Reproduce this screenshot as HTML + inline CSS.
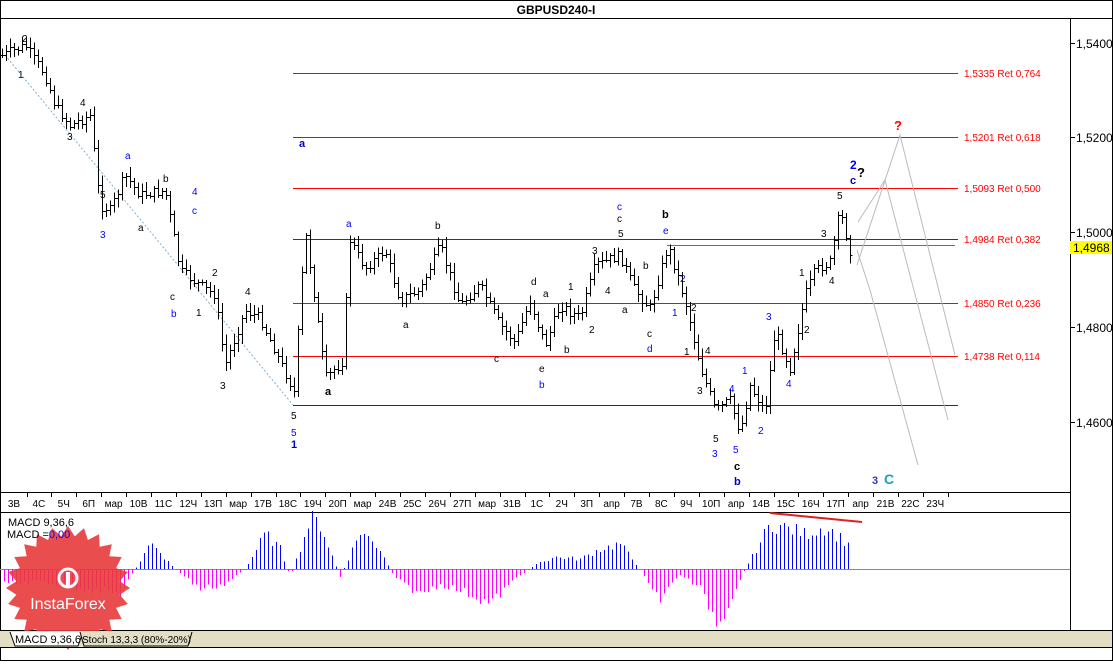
<!DOCTYPE html>
<html><head><meta charset="utf-8">
<style>
html,body{margin:0;padding:0;background:#fff;}
body{width:1113px;height:661px;overflow:hidden;font-family:"Liberation Sans",sans-serif;}
svg text{font-family:"Liberation Sans","DejaVu Sans",sans-serif;}
</style></head><body>
<svg id="s" width="1113" height="661" xmlns="http://www.w3.org/2000/svg" shape-rendering="crispEdges">
<rect width="1113" height="661" fill="#fff"/>
<!-- frame -->
<rect x="0.5" y="0.5" width="1112" height="660" fill="none" stroke="#000"/>
<line x1="0" y1="18.5" x2="1113" y2="18.5" stroke="#000"/>
<text x="556" y="14" font-size="12" font-weight="bold" text-anchor="middle">GBPUSD240-I</text>
<line x1="1070.5" y1="18" x2="1070.5" y2="630" stroke="#000"/>
<line x1="0" y1="492.5" x2="1070" y2="492.5" stroke="#000"/>
<line x1="0" y1="512.5" x2="1070" y2="512.5" stroke="#000"/>
<line x1="0" y1="630.5" x2="1113" y2="630.5" stroke="#000"/>
<!-- price axis -->
<g font-size="12" fill="#000">
<line x1="1070" y1="43.5" x2="1075" y2="43.5" stroke="#000"/><text x="1076" y="48">1,5400</text>
<line x1="1070" y1="137.5" x2="1075" y2="137.5" stroke="#000"/><text x="1076" y="142">1,5200</text>
<line x1="1070" y1="232.5" x2="1075" y2="232.5" stroke="#000"/><text x="1076" y="237">1,5000</text>
<line x1="1070" y1="327.5" x2="1075" y2="327.5" stroke="#000"/><text x="1076" y="332">1,4800</text>
<line x1="1070" y1="422.5" x2="1075" y2="422.5" stroke="#000"/><text x="1076" y="427">1,4600</text>
<rect x="1070" y="241" width="42" height="13" fill="#ffff00"/><text x="1073" y="252">1,4968</text>
</g>
<!-- fib lines -->
<g stroke="#ff0000">
<line x1="293" y1="73.5" x2="958" y2="73.5"/>
<line x1="293" y1="137.5" x2="958" y2="137.5"/>
<line x1="293" y1="188.5" x2="958" y2="188.5"/>
<line x1="293" y1="239.5" x2="958" y2="239.5" stroke="#c00000"/>
<line x1="293" y1="303.5" x2="958" y2="303.5"/>
<line x1="293" y1="356.5" x2="958" y2="356.5"/>
<line x1="293" y1="405.5" x2="958" y2="405.5" stroke="#a00000"/>
</g>
<line x1="667" y1="245.5" x2="955" y2="245.5" stroke="#e020e0"/>
<g font-size="10" fill="#ff0000">
<text x="964" y="77">1,5335 Ret 0,764</text>
<text x="964" y="141">1,5201 Ret 0,618</text>
<text x="964" y="192">1,5093 Ret 0,500</text>
<text x="964" y="243">1,4984 Ret 0,382</text>
<text x="964" y="307">1,4850 Ret 0,236</text>
<text x="964" y="360">1,4738 Ret 0,114</text>
</g>
<!-- diagonal -->
<line x1="5" y1="55" x2="293" y2="405" stroke="#7fb0d0" stroke-dasharray="2,2" shape-rendering="auto"/>
<!-- gray projections -->
<g stroke="#bbb" fill="none" shape-rendering="auto">
<polyline points="857,265 900,135 955,355"/>
<polyline points="858,222 885,180 948,420"/>
<polyline points="857,250 870,290 918,465"/>
</g>
<g id="bars" stroke="#000" fill="none"></g>
<!-- wave labels -->
<g font-size="10" fill="#000">
<text x="22" y="42">2</text><text x="18" y="78">1</text><text x="80" y="106">4</text><text x="67" y="140">3</text>
<text x="100" y="198">5</text><text x="138" y="231">a</text><text x="163" y="182">b</text><text x="170" y="300">c</text>
<text x="212" y="276">2</text><text x="196" y="316">1</text><text x="245" y="295">4</text><text x="220" y="389">3</text>
<text x="291" y="419">5</text><text x="435" y="229">b</text><text x="403" y="328">a</text><text x="494" y="362">c</text>
<text x="531" y="285">d</text><text x="539" y="372">e</text><text x="543" y="297">a</text><text x="568" y="290">1</text>
<text x="564" y="353">b</text><text x="589" y="333">2</text><text x="592" y="254">3</text><text x="605" y="294">4</text>
<text x="618" y="237">5</text><text x="617" y="222">c</text><text x="622" y="313">a</text><text x="643" y="269">b</text>
<text x="647" y="337">c</text><text x="691" y="311">2</text><text x="684" y="355">1</text><text x="705" y="354">4</text>
<text x="697" y="394">3</text><text x="713" y="442">5</text><text x="799" y="276">1</text><text x="804" y="333">2</text>
<text x="821" y="237">3</text><text x="829" y="284">4</text><text x="837" y="199">5</text>
</g>
<g font-size="10" fill="#0000ff">
<text x="125" y="159">a</text><text x="192" y="195">4</text><text x="192" y="214">c</text><text x="171" y="317">b</text>
<text x="100" y="238">3</text><text x="291" y="436">5</text><text x="346" y="227">a</text><text x="539" y="388">b</text>
<text x="617" y="210">c</text><text x="663" y="234">e</text><text x="647" y="352">d</text><text x="680" y="282">2</text>
<text x="672" y="316">1</text><text x="712" y="457">3</text><text x="733" y="453">5</text><text x="742" y="374">1</text>
<text x="729" y="392">4</text><text x="758" y="434">2</text><text x="766" y="320">3</text><text x="786" y="387">4</text>
</g>
<g font-size="11" font-weight="bold">
<text x="299" y="147" fill="#0000cc">a</text><text x="291" y="448" fill="#0000cc">1</text><text x="325" y="395" fill="#000">a</text>
<text x="662" y="218" fill="#000">b</text><text x="734" y="470" fill="#000">c</text><text x="734" y="485" fill="#0000cc">b</text>
<text x="850" y="169" fill="#0000ff" font-size="12">2</text><text x="850" y="184" fill="#0000cc">c</text>
<text x="857" y="177" fill="#000" font-size="13">?</text><text x="894" y="130" fill="#ff0000" font-size="13">?</text>
<text x="872" y="484" fill="#3333cc">3</text><text x="884" y="484" fill="#20a0c0" font-size="14">C</text>
</g>
<!-- time axis -->
<g id="tax" font-size="10" fill="#000"></g>
<!-- MACD -->
<line x1="0" y1="569.5" x2="1070" y2="569.5" stroke="#8a8a8a"/>
<g id="macd"></g>
<line x1="770" y1="513" x2="862" y2="522" stroke="#e02020" stroke-width="2" shape-rendering="auto"/>
<!-- logo -->
<g shape-rendering="auto" opacity="0.9">
<polygon id="star" fill="#e83a3a"/>
<circle cx="68" cy="578" r="9" fill="none" stroke="#fff" stroke-width="3"/>
<rect x="66" y="572" width="4" height="14" fill="#fff"/>
<text x="68" y="609" font-size="16" fill="#fff" text-anchor="middle">InstaForex</text>
</g>
<text x="8" y="526" font-size="11" fill="#000">MACD 9,36,6</text>
<text x="7" y="538" font-size="11" fill="#000">MACD =<tspan fill="#0000ff">0,00</tspan></text>
<!-- tabs -->
<rect x="0" y="631" width="1112" height="16" fill="#e3dfc4"/>
<line x1="0" y1="647.5" x2="1113" y2="647.5" stroke="#000"/>
<path d="M10,632 L15,646 L78,646 L83,632" fill="#fff" stroke="#000" shape-rendering="auto"/>
<path d="M80,632 L84,646 L188,646 L192,632" fill="#e3dfc4" stroke="#000" shape-rendering="auto"/>
<text x="15" y="643" font-size="11">MACD 9,36,6</text>
<text x="82" y="643" font-size="10">Stoch 13,3,3 (80%-20%)</text>
</svg>
<script>
var NS="http://www.w3.org/2000/svg";
function el(t,a,p){var e=document.createElementNS(NS,t);for(var k in a)e.setAttribute(k,a[k]);p.appendChild(e);return e;}
// time axis
var lab="3В 4С 5Ч 6П мар 10В 11С 12Ч 13П мар 17В 18С 19Ч 20П мар 24В 25С 26Ч 27П мар 31В 1С 2Ч 3П апр 7В 8С 9Ч 10П апр 14В 15С 16Ч 17П апр 21В 22С 23Ч".split(" ");
var tax=document.getElementById("tax");
for(var i=0;i<lab.length;i++){var x=14+i*24.9;el("text",{x:x,y:507,"text-anchor":"middle"},tax).textContent=lab[i];
 el("line",{x1:Math.round(x+12.5)+.5,y1:492,x2:Math.round(x+12.5)+.5,y2:497,stroke:"#000"},tax);}
// price path
var kp=[[2,55],[25,45],[45,75],[55,105],[70,125],[90,115],[100,205],[110,210],[125,175],[140,195],[165,190],[180,270],[200,285],[215,295],[225,365],[245,310],[260,318],[275,350],[294,392],[305,230],[315,300],[325,378],[342,362],[350,240],[365,268],[385,250],[400,300],[420,290],[440,245],[460,305],[480,285],[500,325],[515,342],[530,300],[545,345],[560,305],[580,318],[595,265],[620,255],[635,290],[650,308],[668,245],[685,300],[700,365],[715,410],[730,400],[740,432],[750,385],[765,412],[775,330],[790,368],[805,295],[815,270],[830,262],[840,210],[850,250]];
function py(x){for(var i=0;i<kp.length-1;i++){if(x<=kp[i+1][0]){var a=kp[i],b=kp[i+1];return a[1]+(b[1]-a[1])*(x-a[0])/(b[0]-a[0]);}}return kp[kp.length-1][1];}
var seed=7;function rnd(){seed=(seed*9301+49297)%233280;return seed/233280;}
var g=document.getElementById("bars"),prev=py(2);
for(var x=2;x<=850;x+=4){var c=py(x)+(rnd()-.5)*10;var o=prev;var hi=Math.min(o,c)-rnd()*8-2,lo=Math.max(o,c)+rnd()*8+2;
 var xx=Math.round(x)+.5;
 el("line",{x1:xx,y1:hi,x2:xx,y2:lo},g);
 el("line",{x1:xx-2,y1:Math.round(o)+.5,x2:xx,y2:Math.round(o)+.5},g);
 el("line",{x1:xx,y1:Math.round(c)+.5,x2:xx+2,y2:Math.round(c)+.5},g);
 prev=c;}
// MACD
var m=document.getElementById("macd");
var mk=[[3,-15],[40,-12],[90,-20],[120,-25],[135,0],[150,25],[165,10],[175,0],[200,-20],[225,-15],[245,0],[265,35],[280,20],[290,-8],[310,50],[320,45],[335,5],[340,-8],[360,38],[380,20],[395,-10],[420,-25],[440,-15],[470,-25],[490,-35],[515,-10],[535,5],[555,12],[580,10],[600,20],[620,25],[640,0],[660,-30],[680,-5],[700,-20],[718,-55],[735,-20],[745,0],[770,45],[790,40],[805,35],[825,42],[835,35],[848,25]];
function my(x){for(var i=0;i<mk.length-1;i++){if(x<=mk[i+1][0]){var a=mk[i],b=mk[i+1];return a[1]+(b[1]-a[1])*(x-a[0])/(b[0]-a[0]);}}return 0;}
for(var x=4;x<=849;x+=4){var v=my(x)*(0.8+rnd()*0.4);var xx=Math.round(x)+.5;
 el("line",{x1:xx,y1:569,x2:xx,y2:569-v,stroke:v>=0?"#0000ff":"#ff00ff"},m);}
// star
var pts=[],cx=68,cy=588,n=24;
for(var i=0;i<n*2;i++){var r=i%2?52:62,a=Math.PI*i/n;pts.push((cx+r*Math.cos(a)).toFixed(1)+","+(cy+r*Math.sin(a)).toFixed(1));}
document.getElementById("star").setAttribute("points",pts.join(" "));
</script>
</body></html>
